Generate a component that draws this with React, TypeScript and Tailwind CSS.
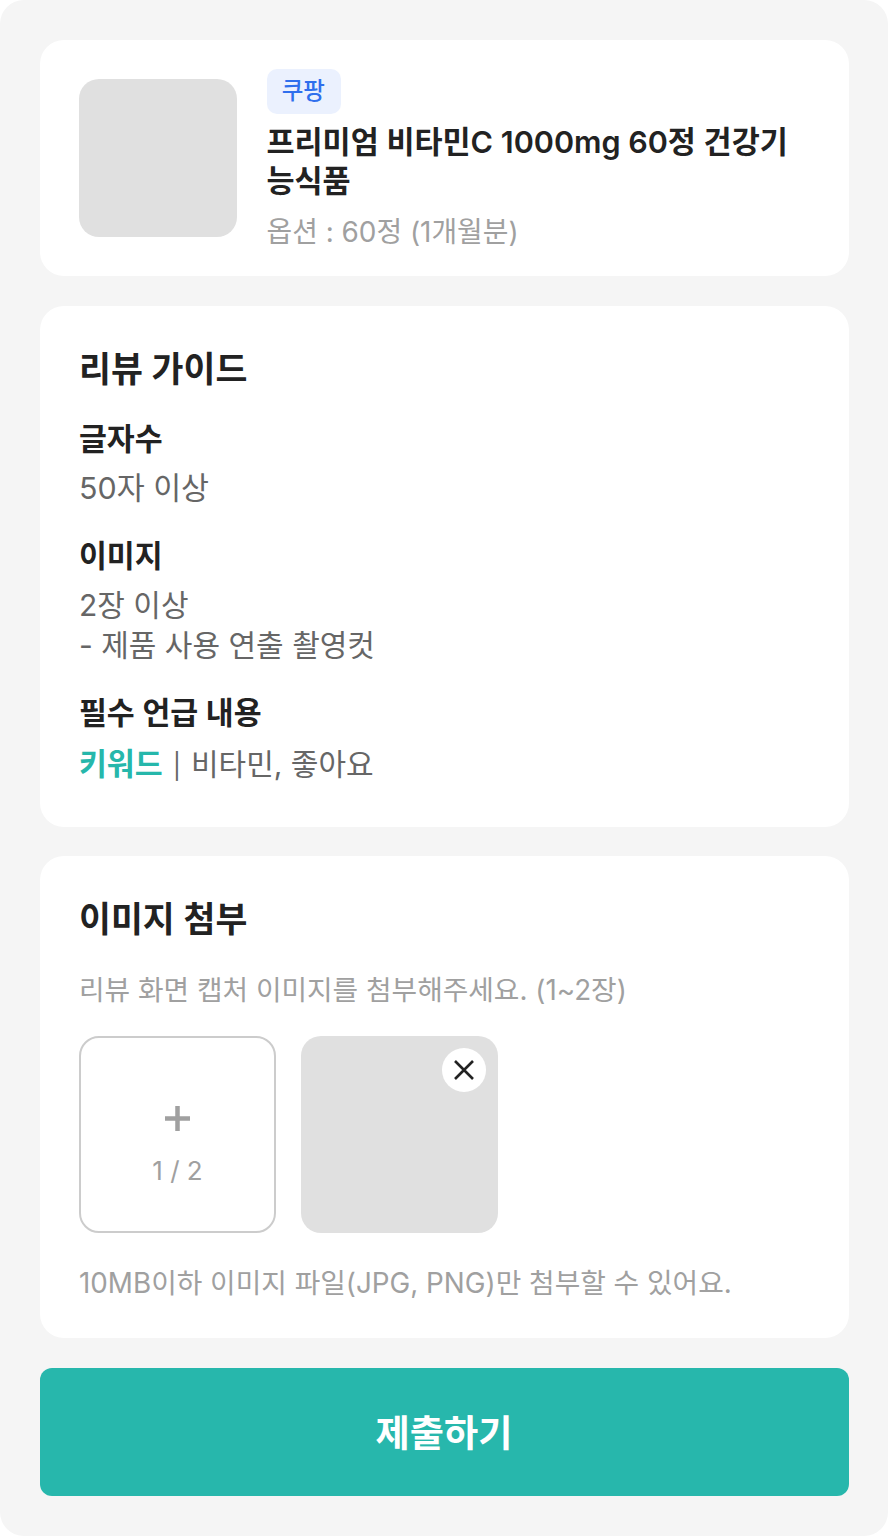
export default function App() {
  const font = { fontFamily: 'Inter, "Noto Sans CJK KR", sans-serif' };
  return (
    <div style={font} className="bg-white w-[888px] h-[1536px] overflow-hidden">
      <div className="bg-[#f5f5f5] w-[888px] h-[1536px] rounded-[24px] px-[39.5px] pt-[39.5px] flex flex-col">
        <section className="bg-white rounded-[24px] h-[236.5px] px-[39.5px] pt-[29px] flex items-start gap-[29.5px]">
          <div className="mt-[10.5px] w-[158px] h-[158px] bg-[#e0e0e0] rounded-[20px] shrink-0" />
          <div className="flex-1 flex flex-col items-start">
            <span className="bg-[#ebf1fe] text-[#2f6fed] rounded-[10px] w-[74.5px] h-[45px] pr-[1px] flex items-center justify-center text-[23.5px] font-medium">쿠팡</span>
            <h2 className="mt-[8.5px] text-[30.5px] leading-[39px] font-semibold text-[#222222]">프리미엄 비타민C 1000mg 60정 건강기능식품</h2>
            <p className="mt-[13px] text-[27.9px] leading-[39px] text-[#a0a0a0]">옵션 : 60정 (1개월분)</p>
          </div>
        </section>

        <section className="mt-[30px] bg-white rounded-[24px] h-[521px] px-[39.5px] pt-[40px] text-[#222222]">
          <h2 className="text-[34.7px] leading-[47px] font-semibold">리뷰 가이드</h2>
          <h3 className="mt-[26px] text-[30.3px] leading-[41px] font-semibold">글자수</h3>
          <p className="mt-[8px] text-[30.4px] leading-[41px] text-[#666666]">50자 이상</p>
          <h3 className="mt-[27px] text-[30.3px] leading-[41px] font-semibold">이미지</h3>
          <p className="mt-[8px] text-[30px] leading-[40px] text-[#666666]">2장 이상<br />- 제품 사용 연출 촬영컷</p>
          <h3 className="mt-[28px] text-[30.3px] leading-[41px] font-semibold">필수 언급 내용</h3>
          <p className="mt-[10px] text-[30px] leading-[41px] text-[#666666]"><span className="font-semibold text-[#26b7ab] text-[30.3px]">키워드</span><span className="mx-[10px] text-[25px]">|</span>비타민, 좋아요</p>
        </section>

        <section className="mt-[29px] bg-white rounded-[24px] h-[482px] px-[39.5px] pt-[40px]">
          <h2 className="text-[34.7px] leading-[47px] font-semibold text-[#222222]">이미지 첨부</h2>
          <p className="mt-[28px] text-[27.8px] leading-[39px] text-[#a0a0a0]">리뷰 화면 캡처 이미지를 첨부해주세요. (1~2장)</p>
          <div className="mt-[26px] flex gap-[25px]">
            <div className="w-[197px] h-[197px] border-[2.5px] border-[#cccccc] rounded-[20px] flex flex-col items-center">
              <svg className="mt-[68px] mr-[1px]" width="25" height="25" viewBox="0 0 25 25" fill="none" stroke="#a0a0a0" strokeWidth="4.500"><path d="M12.500 0V25M0 12.500H25" /></svg>
              <span className="mt-[20px] text-[26px] leading-[39px] text-[#a0a0a0]">1 / 2</span>
            </div>
            <div className="relative w-[197px] h-[197px] bg-[#e0e0e0] rounded-[20px]">
              <button className="absolute top-[12px] right-[12px] w-[44px] h-[44px] rounded-full bg-white flex items-center justify-center">
                <svg width="20" height="20" viewBox="0 0 20 20" fill="none" stroke="#222222" strokeWidth="2.600"><path d="M1 1L19 19M19 1L1 19" /></svg>
              </button>
            </div>
          </div>
          <p className="mt-[31px] text-[27.8px] leading-[39px] text-[#a0a0a0]">10MB이하 이미지 파일(JPG, PNG)만 첨부할 수 있어요.</p>
        </section>

        <button className="mt-[30px] h-[128px] pt-[3px] bg-[#27b7ac] rounded-[12px] text-white text-[37.2px] font-semibold">제출하기</button>
      </div>
    </div>
  );
}
